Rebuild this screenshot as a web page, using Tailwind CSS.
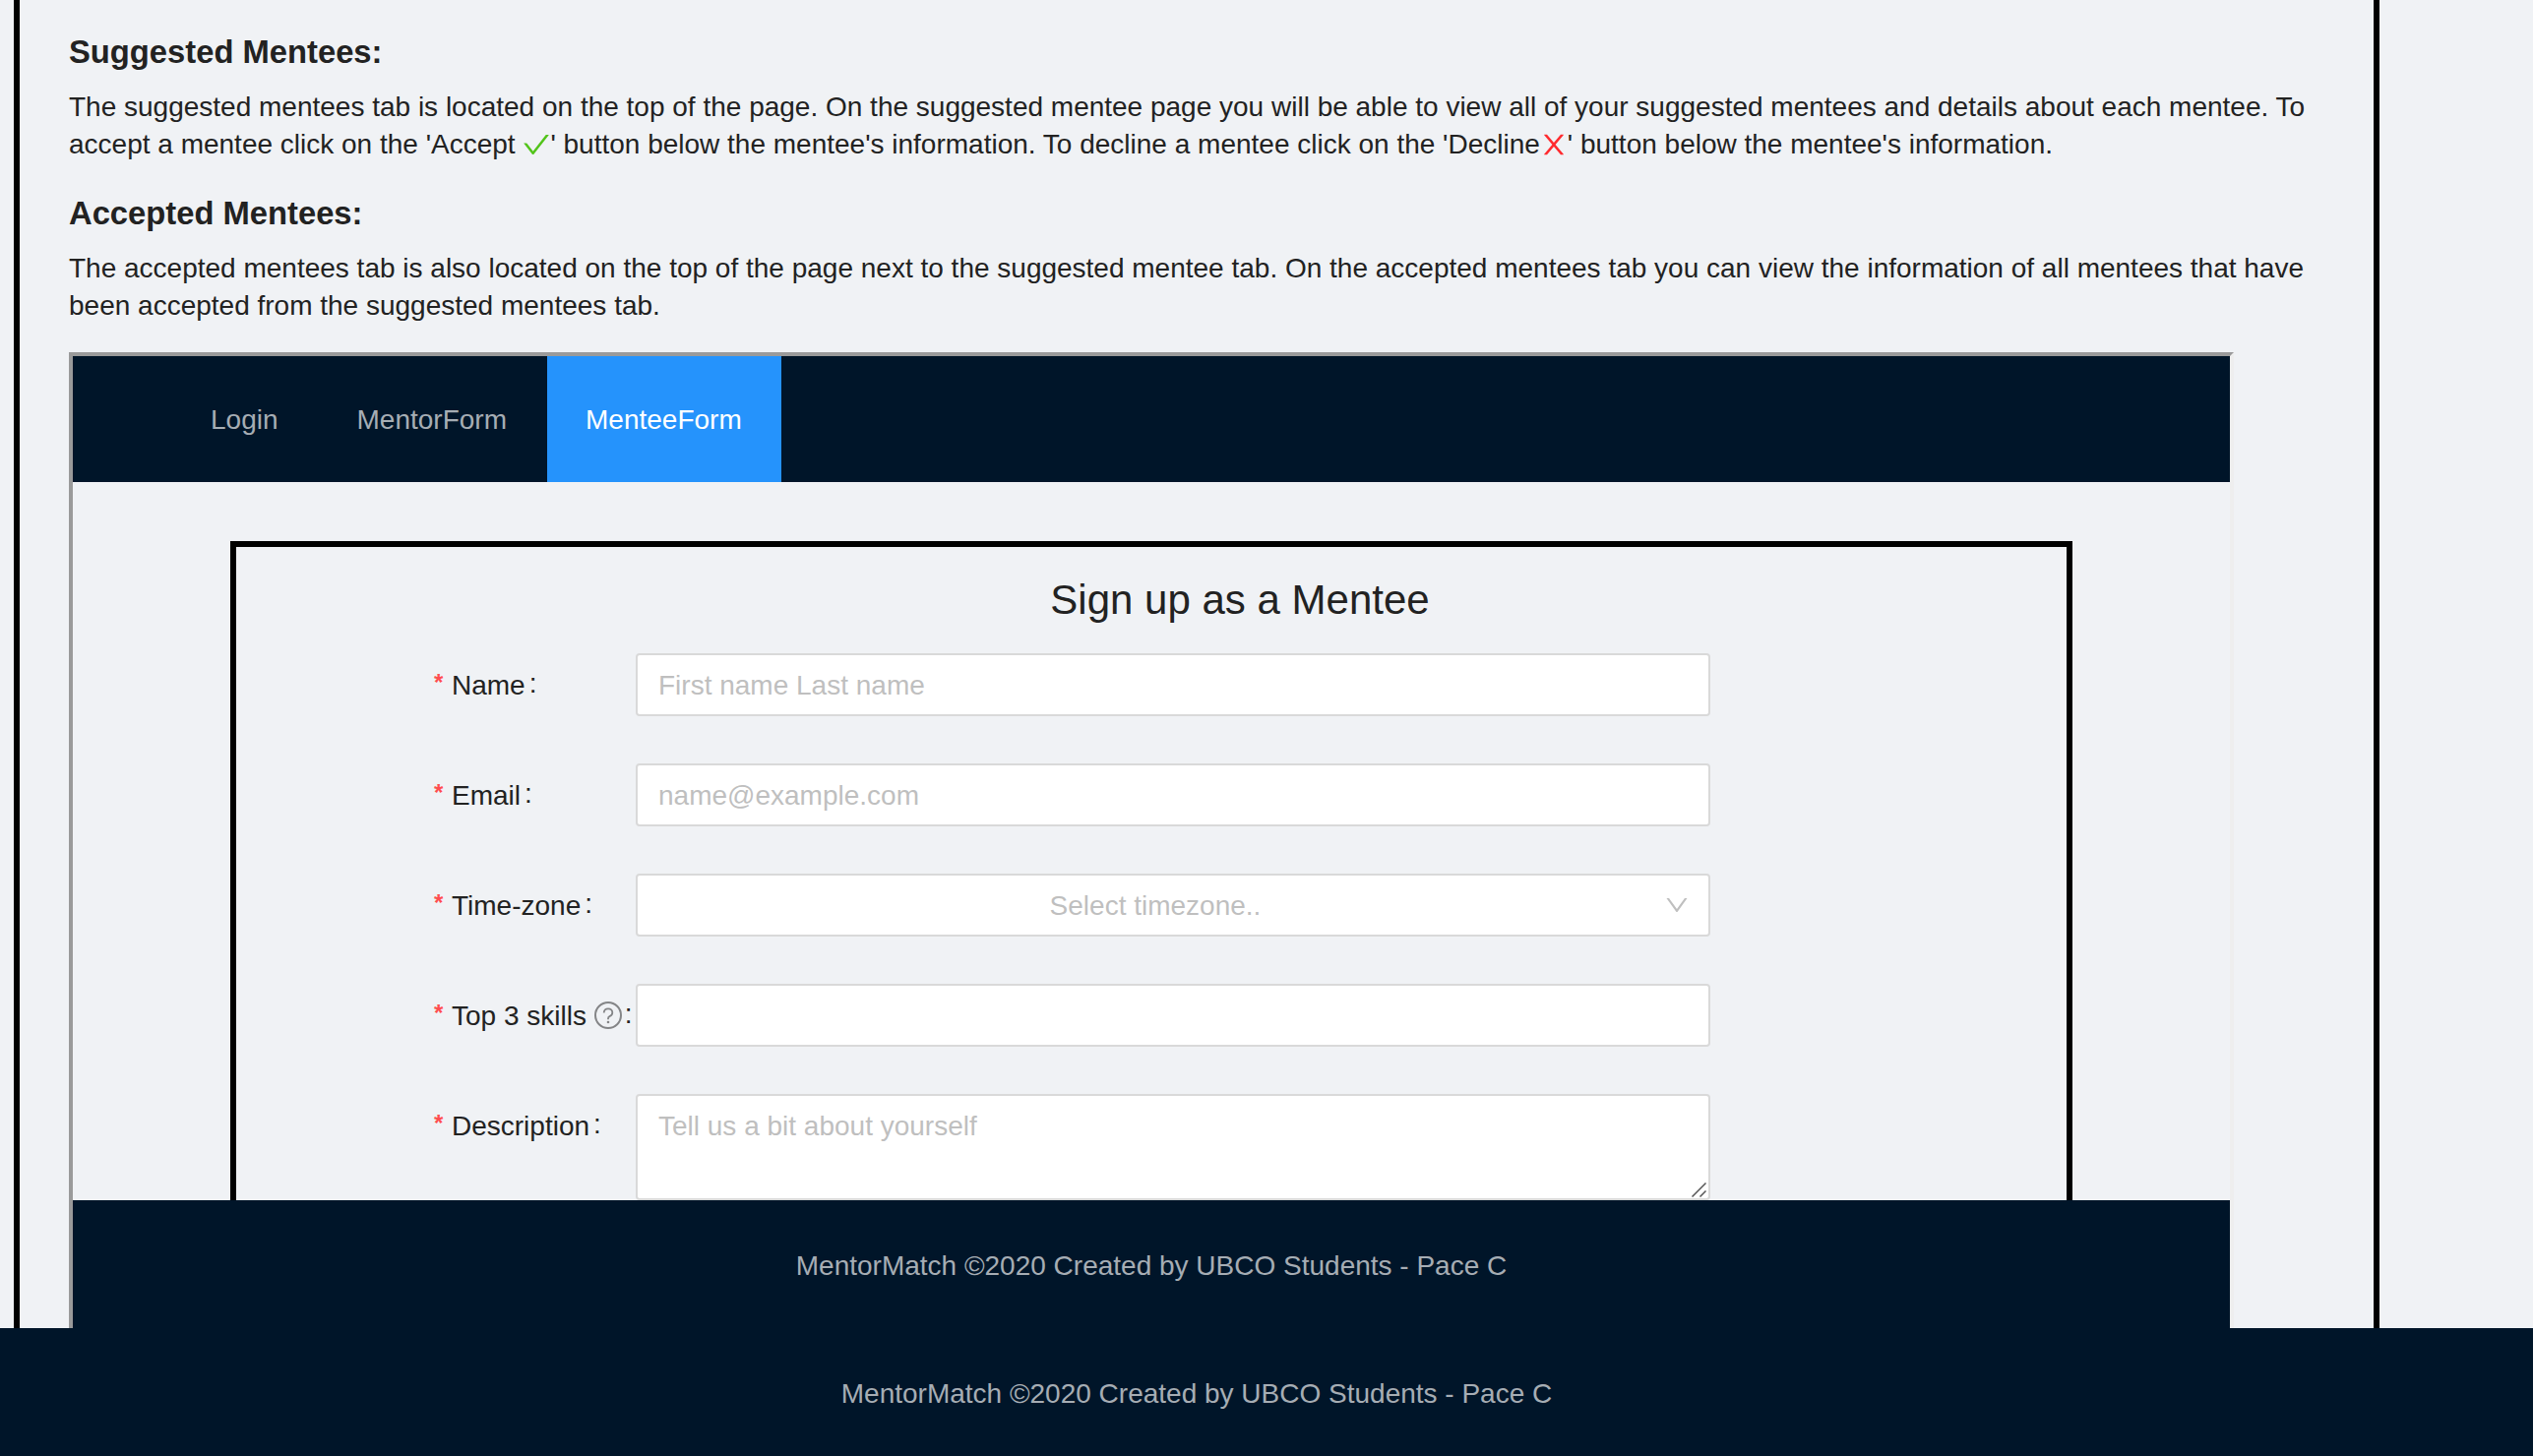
<!DOCTYPE html>
<html lang="en">
<head>
<meta charset="utf-8">
<title>MentorMatch</title>
<script src="https://cdn.jsdelivr.net/npm/@tailwindcss/browser@4"></script>
</head>
<body class="h-[1480px] w-[2574px] overflow-hidden bg-[#f0f2f5] font-['Liberation_Sans',Arial,sans-serif] text-[28px] text-[#222]">
<div class="flex h-full flex-col">
  <main class="ml-[14px] h-[1350px] w-[2404px] overflow-hidden border-x-[6px] border-black px-[50px] pt-[33px]">
    <h3 class="h-[57px] text-[32.76px] leading-[40px] font-bold">Suggested Mentees:</h3>
    <p class="h-[107px] leading-[38px] whitespace-nowrap">The suggested mentees tab is located on the top of the page. On the suggested mentee page you will be able to view all of your suggested mentees and details about each mentee. To<br>accept a mentee click on the 'Accept <svg class="-my-2 inline-block size-[28px] overflow-visible align-[3.5px] text-[#52c41a]" viewBox="64 64 896 896" fill="currentColor"><path d="M912 190h-69.9c-9.8 0-19.1 4.5-25.1 12.2L404.7 724.5 207 474a32 32 0 00-25.1-12.2H112c-6.7 0-10.4 7.7-6.3 12.9l273.9 347c12.8 16.2 37.4 16.2 50.3 0l488.4-618.9c4.1-5.1.4-12.8-6.3-12.8z"/></svg>' button below the mentee's information. To decline a mentee click on the 'Decline<svg class="-my-2 inline-block size-[28px] overflow-visible align-[3.5px] text-[#ff2a2e]" viewBox="64 64 896 896" fill="currentColor"><path d="M563.8 512l262.5-312.9c4.4-5.2.7-13.1-6.1-13.1h-79.8c-4.7 0-9.2 2.1-12.3 5.7L511.6 449.8 295.1 191.7c-3-3.6-7.5-5.7-12.3-5.7H203c-6.8 0-10.5 7.9-6.1 13.1L459.4 512 196.9 824.9A7.95 7.95 0 00203 838h79.8c4.7 0 9.2-2.1 12.3-5.7l216.5-258.1 216.5 258.1c3 3.6 7.5 5.7 12.3 5.7h79.8c6.8 0 10.5-7.9 6.1-13.1L563.8 512z"/></svg>' button below the mentee's information.</p>
    <h3 class="h-[57px] text-[32.76px] leading-[40px] font-bold">Accepted Mentees:</h3>
    <p class="h-[104px] leading-[38px] whitespace-nowrap">The accepted mentees tab is also located on the top of the page next to the suggested mentee tab. On the accepted mentees tab you can view the information of all mentees that have<br>been accepted from the suggested mentees tab.</p>

    <section class="flex h-[1000px] w-[2200px] flex-col border-4 border-t-[#9a9a9a] border-r-[#eeeeee] border-b-[#eeeeee] border-l-[#9a9a9a]">
      <nav class="flex h-[128px] shrink-0 overflow-hidden bg-[#001529] pl-[100px] leading-[130px] text-[#a6adb4]">
        <a class="px-10">Login</a>
        <a class="px-10">MentorForm</a>
        <a class="ml-px bg-[#2593fc] pr-10 pl-[39px] text-white">MenteeForm</a>
      </nav>
      <div class="h-[730px] shrink-0 overflow-hidden px-[160px] pt-[60px]">
        <form class="h-[900px] border-[6px] border-black pt-[28px] pl-[200px]">
          <h2 class="mb-[28px] w-[1640px] text-center text-[42px] leading-[52px]">Sign up as a Mentee</h2>
          <div class="flex flex-col gap-12">
            <div class="flex">
              <label class="flex h-16 w-[206px] items-center pt-0.5 whitespace-pre"><span class="relative -top-[3px] w-[19px] pl-px text-2xl font-bold text-[#ff4d4f]">*</span>Name<span class="relative -top-0.5 ml-1">:</span></label>
              <div class="h-16 w-[1092px] rounded border-2 border-[#d9d9d9] bg-white px-[21px] leading-[62px] text-[#bfbfbf]">First name Last name</div>
            </div>
            <div class="flex">
              <label class="flex h-16 w-[206px] items-center pt-0.5 whitespace-pre"><span class="relative -top-[3px] w-[19px] pl-px text-2xl font-bold text-[#ff4d4f]">*</span>Email<span class="relative -top-0.5 ml-1">:</span></label>
              <div class="h-16 w-[1092px] rounded border-2 border-[#d9d9d9] bg-white px-[21px] leading-[62px] text-[#bfbfbf]">name@example.com</div>
            </div>
            <div class="flex">
              <label class="flex h-16 w-[206px] items-center pt-0.5 whitespace-pre"><span class="relative -top-[3px] w-[19px] pl-px text-2xl font-bold text-[#ff4d4f]">*</span>Time-zone<span class="relative -top-0.5 ml-1">:</span></label>
              <div class="flex h-16 w-[1092px] items-center rounded border-2 border-[#d9d9d9] bg-white pr-[18px] pl-5 text-[#bfbfbf]"><span class="flex-1 pt-0.5 pr-2.5 text-center">Select timezone..</span><svg class="size-[28px]" viewBox="0 0 1024 1024" fill="currentColor"><path d="M884 256h-75c-5.1 0-9.9 2.5-12.9 6.6L512 654.2 227.9 262.6c-3-4.1-7.8-6.6-12.9-6.6h-75c-6.5 0-10.3 7.4-6.5 12.7l352.6 486.1c12.8 17.6 39 17.6 51.7 0l352.6-486.1c3.9-5.3.1-12.7-6.4-12.7z"/></svg></div>
            </div>
            <div class="flex">
              <label class="flex h-16 w-[206px] items-center pt-0.5 whitespace-pre"><span class="relative -top-[3px] w-[19px] pl-px text-2xl font-bold text-[#ff4d4f]">*</span>Top 3 skills <svg class="mb-0.5 size-[28px] shrink-0 text-[#848587]" viewBox="0 0 28 28" fill="none" stroke="currentColor"><circle cx="14" cy="14" r="13" stroke-width="2"/><path d="M9.7 11.6C9.7 9 11.5 7.3 14 7.3s4.3 1.7 4.3 4c0 1.8-1 3-2.5 3.6-1.2.5-1.8 1.2-1.8 2.4v1" stroke-width="1.8"/><circle cx="14" cy="21" r="1.3" fill="currentColor" stroke="none"/></svg><span class="relative -top-0.5 ml-[3px]">:</span></label>
              <div class="h-16 w-[1092px] rounded border-2 border-[#d9d9d9] bg-white"></div>
            </div>
            <div class="flex">
              <label class="flex h-16 w-[206px] items-center pt-0.5 whitespace-pre"><span class="relative -top-[3px] w-[19px] pl-px text-2xl font-bold text-[#ff4d4f]">*</span>Description<span class="relative -top-0.5 ml-1">:</span></label>
              <div class="flex h-[108px] w-[1092px] items-end justify-between rounded border-2 border-[#d9d9d9] bg-white pl-[21px]"><span class="self-start leading-[62px] text-[#bfbfbf]">Tell us a bit about yourself</span><svg class="mr-0.5 mb-px size-4" viewBox="0 0 16 16" fill="none" stroke="#555" stroke-width="1.5"><path d="M1.5 15.5L15.5 1.5M9.5 15.5L15.5 9.5"/></svg></div>
            </div>
          </div>
        </form>
      </div>
      <footer class="h-[142px] shrink-0 bg-[#001529] pt-12 text-center leading-[38px] text-[#a6adb4]">MentorMatch ©2020 Created by UBCO Students - Pace C</footer>
    </section>
  </main>
  <footer class="h-[130px] bg-[#001529] pt-12 pr-[142px] text-center leading-[38px] text-[#a6adb4]">MentorMatch ©2020 Created by UBCO Students - Pace C</footer>
</div>
</body>
</html>
